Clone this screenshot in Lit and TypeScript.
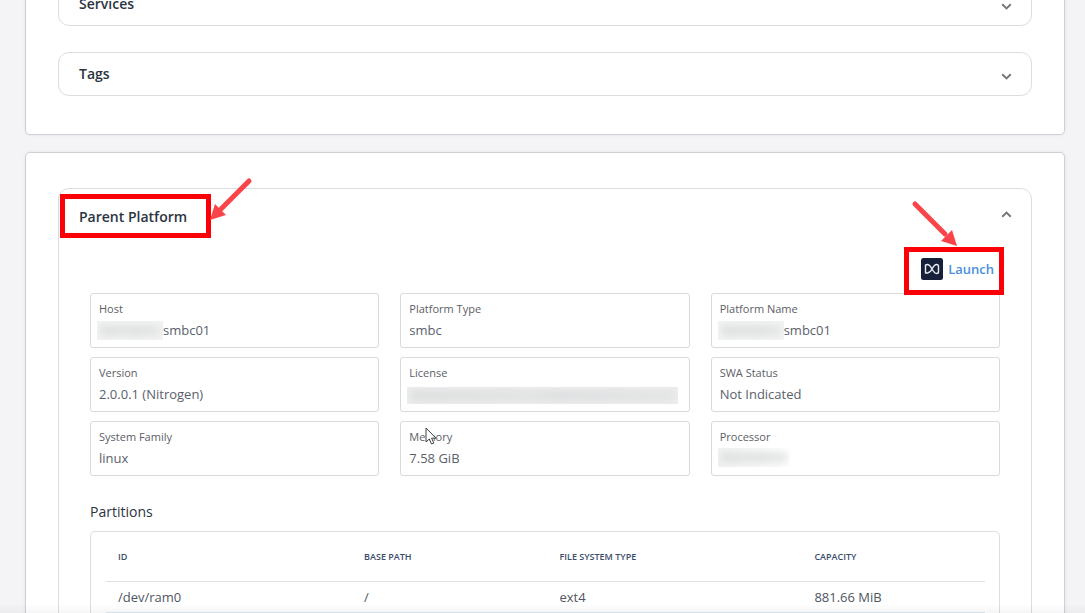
import { LitElement, html, css, svg, nothing } from "lit";
import { customElement, property } from "lit/decorators.js";

interface Field {
  label: string;
  value: string;
  mask?: "host" | "name" | "license" | "processor";
  pointer?: boolean;
}

const FIELDS: Field[] = [
  { label: "Host", value: "smbc01", mask: "host" },
  { label: "Platform Type", value: "smbc" },
  { label: "Platform Name", value: "smbc01", mask: "name" },
  { label: "Version", value: "2.0.0.1 (Nitrogen)" },
  { label: "License", value: "", mask: "license" },
  { label: "SWA Status", value: "Not Indicated" },
  { label: "System Family", value: "linux" },
  { label: "Memory", value: "7.58 GiB", pointer: true },
  { label: "Processor", value: "", mask: "processor" },
];

const PARTITIONS = [
  { id: "/dev/ram0", path: "/", type: "ext4", capacity: "881.66 MiB" },
];

@customElement("app-chevron")
export class AppChevron extends LitElement {
  @property({ type: Boolean, reflect: true }) up = false;

  static styles = css`
    :host {
      display: block;
      width: 11px;
      height: 7px;
      margin-top: 4px;
    }
    :host([up]) {
      margin: 0 0 5px;
    }
    svg {
      display: block;
    }
  `;

  render() {
    const line = this.up
      ? svg`<path d="M1.200 5.700 5.500 1.600 9.800 5.700" />`
      : svg`<path d="M1.200 1.300 5.500 5.400 9.800 1.300" />`;
    return html`<svg width="11" height="7" viewBox="0 0 11 7" fill="none" stroke="#75777b" stroke-width="2" aria-hidden="true">${line}</svg>`;
  }
}

@customElement("platform-field")
export class PlatformField extends LitElement {
  @property({ attribute: false }) field!: Field;

  static styles = css`
    :host {
      display: block;
      position: relative;
      box-sizing: border-box;
      height: 55px;
      padding: 7px 8px;
      border: 1px solid #d9dadc;
      border-radius: 3px;
    }
    .label {
      font-size: 11px;
      line-height: 16px;
      color: #5c6066;
    }
    .value {
      display: flex;
      align-items: center;
      margin-top: 3px;
      font-size: 13px;
      line-height: 20px;
      color: #5a616b;
    }
    .mask {
      display: block;
      overflow: hidden;
      height: 19px;
      margin-left: -2px;
      padding: 5px 3px;
      box-sizing: border-box;
      background: #f3f4f4;
    }
    .mask::before {
      content: "";
      display: block;
      height: 9px;
      background: linear-gradient(90deg, #d9dbdc, #dfe0e0 45%, #dadcdd 55%, #e1e2e2);
      filter: blur(4px);
    }
    .host,
    .name {
      width: 66px;
    }
    .license {
      width: 271px;
      height: 17px;
      margin-top: 3px;
      padding: 4px;
      background: #ededee;
    }
    .processor {
      width: 72px;
      background: linear-gradient(90deg, #f1f2f2, #ffffff);
    }
    .pointer {
      position: absolute;
      left: 24px;
      top: 5px;
    }
  `;

  render() {
    const f = this.field;
    return html`
      <div class="label">${f.label}</div>
      <div class="value">
        ${f.mask ? html`<span class="mask ${f.mask}"></span>` : nothing}${f.value}
      </div>
      ${f.pointer
        ? html`<svg class="pointer" width="12" height="18" viewBox="0 0 12 18" aria-hidden="true">
            <path d="M1 1v14l3.3-3 2.2 5 2.3-1-2.2-4.8H11z" fill="#fff" stroke="#3c3f45" stroke-width="1" />
          </svg>`
        : nothing}
    `;
  }
}

@customElement("app-root")
export class AppRoot extends LitElement {
  static styles = css`
    :host {
      display: block;
      position: relative;
      height: 100vh;
      overflow: hidden;
      background: #f4f4f6;
      color: #2b3440;
      font-family: "Open Sans", "Noto Sans", sans-serif;
      font-size: 13px;
    }
    main {
      display: flex;
      flex-direction: column;
      gap: 17px;
      margin: -52px 20px 0 25px;
    }
    .card {
      padding: 33px 32px 38px;
      border: 1px solid #cfd0d5;
      border-radius: 5px;
      background: #fff;
      box-shadow: 0 0 3px #e2e2e6;
    }
    .stack {
      display: flex;
      flex-direction: column;
      gap: 26px;
    }
    .platform-card {
      padding-top: 35px;
    }
    .panel {
      border: 1px solid #dcdde0;
      border-radius: 11px;
      background: #fff;
    }
    .open {
      position: relative;
    }
    h2,
    h3 {
      margin: 0;
      font-weight: 600;
    }
    .toggle {
      display: flex;
      align-items: center;
      justify-content: space-between;
      width: 100%;
      height: 42px;
      padding: 0 19px 0 20px;
      border: 0;
      background: none;
      font: 600 14px/20px "Open Sans", "Noto Sans", sans-serif;
      color: #2b3440;
      cursor: pointer;
    }
    .open .toggle {
      height: 56px;
    }
    .content {
      padding: 0 31px 40px;
    }
    .actions {
      display: flex;
      align-items: center;
      justify-content: flex-end;
      height: 48px;
      padding-right: 6px;
    }
    .launch {
      display: flex;
      align-items: center;
      gap: 5px;
      font-size: 13px;
      line-height: 20px;
      font-weight: 600;
      color: #4a90d9;
      text-decoration: none;
    }
    .fields {
      display: grid;
      grid-template-columns: repeat(3, 1fr);
      gap: 9px 21px;
    }
    h3 {
      margin: 26px 0 9px;
      font-size: 14px;
      line-height: 20px;
      font-weight: 400;
    }
    .table-box {
      padding: 0 14px 20px 15px;
      border: 1px solid #dcdde0;
      border-radius: 5px;
    }
    table {
      width: 100%;
      table-layout: fixed;
      border-collapse: collapse;
    }
    .c1 {
      width: 28%;
    }
    .c2 {
      width: 22%;
    }
    .c3 {
      width: 29%;
    }
    th,
    td {
      box-sizing: border-box;
      padding: 0 0 0 12px;
      text-align: left;
    }
    th:nth-child(n + 3),
    td:nth-child(n + 3) {
      padding-left: 14px;
    }
    th {
      height: 49px;
      border-bottom: 1px solid #dfe0e2;
      font-size: 9px;
      font-weight: 600;
      color: #3b4c6b;
      text-transform: uppercase;
    }
    td {
      height: 31px;
      border-bottom: 1px solid #dbe8f2;
      font-size: 13px;
      color: #4f5661;
    }
    .mark {
      position: absolute;
      box-sizing: border-box;
      border: 5px solid #fb0007;
      pointer-events: none;
    }
    .mark-title {
      left: 1px;
      top: 5px;
      width: 151px;
      height: 44px;
    }
    .mark-launch {
      right: 27px;
      top: 58px;
      width: 100px;
      height: 48px;
    }
    .arrow {
      position: absolute;
      pointer-events: none;
    }
    .arrow-title {
      left: 151px;
      top: -13px;
    }
    .arrow-launch {
      right: 73px;
      top: 10px;
    }
    .fade {
      position: absolute;
      left: 0;
      right: 0;
      bottom: 0;
      height: 10px;
      background: linear-gradient(transparent, rgba(0, 0, 0, 0.035));
      pointer-events: none;
    }
  `;

  private closedPanel(title: string) {
    return html`
      <section class="panel">
        <h2><button class="toggle" aria-expanded="false">${title}<app-chevron></app-chevron></button></h2>
      </section>
    `;
  }

  render() {
    return html`
      <main>
        <div class="card stack">
          ${this.closedPanel("Services")} ${this.closedPanel("Tags")}
        </div>

        <div class="card platform-card">
          <section class="panel open">
            <h2>
              <button class="toggle" aria-expanded="true">Parent Platform<app-chevron up></app-chevron></button>
            </h2>
            <div class="content">
              <div class="actions">
                <a class="launch" href="#launch">
                  <svg width="22" height="22" viewBox="0 0 22 22" aria-hidden="true">
                    <rect width="22" height="22" rx="2.5" fill="#17203a" />
                    <g fill="none" stroke="#e8ebf2" stroke-width="1.4" stroke-linejoin="round">
                      <path d="M4.500 7v8h2c1.800 0 3-1.300 4.500-4 1.500-2.700 2.700-4.500 4.500-4.500 1.300 0 2 .6 2 1.800v5.400c0 1.200-.7 1.800-2 1.800-1.800 0-3-1.800-4.500-4.500-1.500-2.700-2.700-4.500-4.500-4.500-1.300 0-2 .3-2 1.500z" />
                    </g>
                  </svg>
                  <span>Launch</span>
                </a>
              </div>

              <div class="fields">
                ${FIELDS.map((f) => html`<platform-field .field=${f}></platform-field>`)}
              </div>

              <h3>Partitions</h3>
              <div class="table-box">
                <table>
                  <colgroup>
                    <col class="c1" />
                    <col class="c2" />
                    <col class="c3" />
                    <col />
                  </colgroup>
                  <thead>
                    <tr>
                      <th scope="col">ID</th>
                      <th scope="col">Base Path</th>
                      <th scope="col">File System Type</th>
                      <th scope="col">Capacity</th>
                    </tr>
                  </thead>
                  <tbody>
                    ${PARTITIONS.map(
                      (p) => html`<tr>
                        <td>${p.id}</td>
                        <td>${p.path}</td>
                        <td>${p.type}</td>
                        <td>${p.capacity}</td>
                      </tr>`,
                    )}
                  </tbody>
                </table>
              </div>
            </div>

            <div class="mark mark-title"></div>
            <svg class="arrow arrow-title" width="46" height="46" viewBox="0 0 46 46" aria-hidden="true">
              <path d="M39 5 11 33" stroke="#f94549" stroke-width="5" stroke-linecap="round" />
              <path d="M0 44 5 28 16 39z" fill="#f94549" />
            </svg>
            <div class="mark mark-launch"></div>
            <svg class="arrow arrow-launch" width="48" height="48" viewBox="0 0 48 48" aria-hidden="true">
              <path d="M5 5 35 35" stroke="#f94549" stroke-width="5" stroke-linecap="round" />
              <path d="M47 47 31 42 42 31z" fill="#f94549" />
            </svg>
          </section>
        </div>
      </main>
      <div class="fade"></div>
    `;
  }
}
